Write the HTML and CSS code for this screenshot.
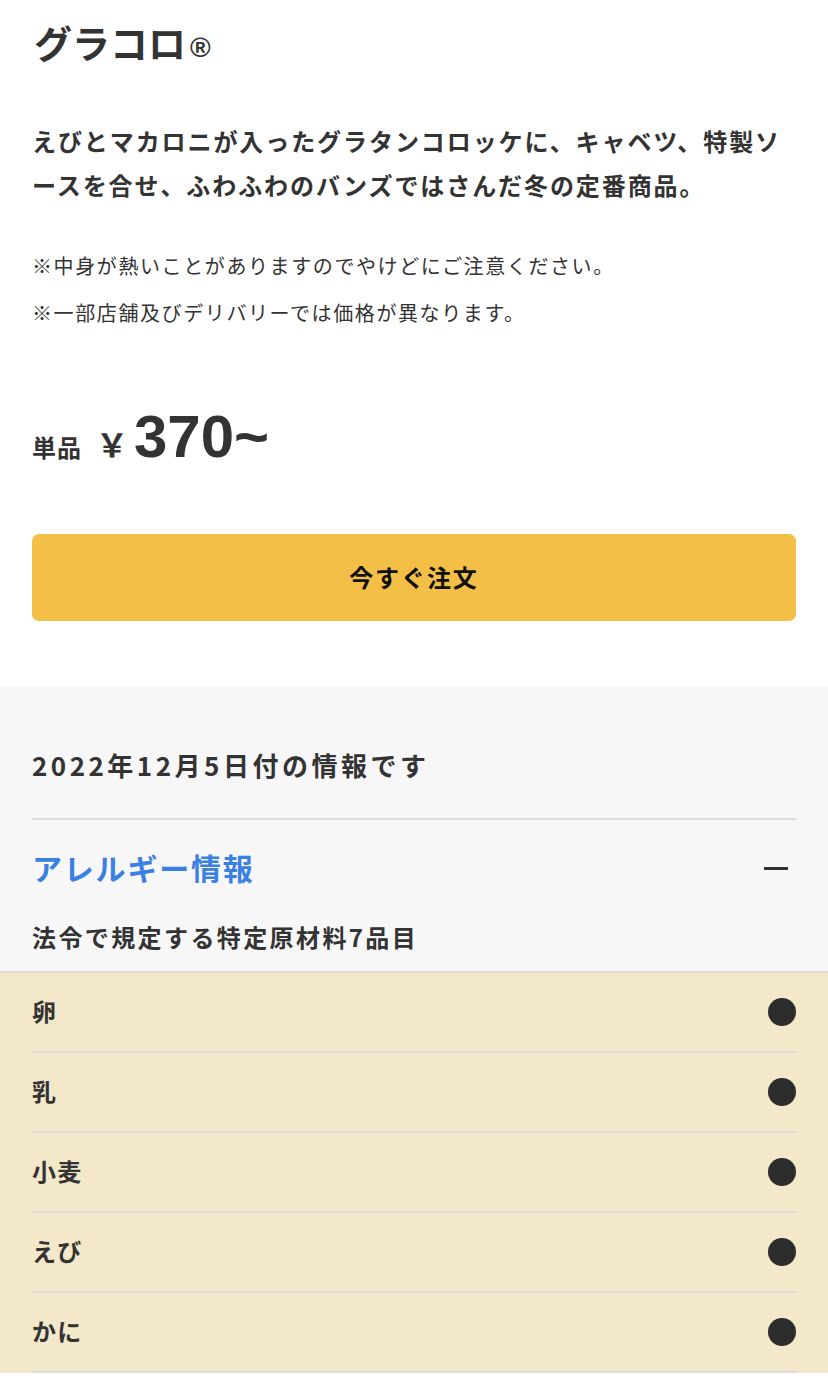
FILE: index.html
```html
<!DOCTYPE html>
<html lang="ja">
<head>
<meta charset="utf-8">
<title>グラコロ</title>
<link rel="stylesheet" href="styles.css">
</head>
<body>
<section class="product">
  <h1 class="title">グラコロ<span class="reg">®</span></h1>
  <p class="desc">えびとマカロニが入ったグラタンコロッケに、キャベツ、特製ソースを合せ、ふわふわのバンズではさんだ冬の定番商品。</p>
  <p class="note first">※中身が熱いことがありますのでやけどにご注意ください。</p>
  <p class="note">※一部店舗及びデリバリーでは価格が異なります。</p>
  <div class="price">
    <span class="price-label">単品</span>
    <span class="yen">￥</span>
    <span class="amount">370~</span>
  </div>
  <a class="order" href="#">今すぐ注文</a>
</section>
<section class="info">
  <p class="date">2022年12月5日付の情報です</p>
  <div class="acc-head">
    <h2 class="acc-title">アレルギー情報</h2>
    <span class="minus"></span>
  </div>
  <p class="sub">法令で規定する特定原材料7品目</p>
</section>
<section class="allergens">
  <div class="row"><span class="name">卵</span><span class="dot"></span></div>
  <div class="row"><span class="name">乳</span><span class="dot"></span></div>
  <div class="row"><span class="name">小麦</span><span class="dot"></span></div>
  <div class="row"><span class="name">えび</span><span class="dot"></span></div>
  <div class="row"><span class="name">かに</span><span class="dot"></span></div>
</section>
</body>
</html>
```

FILE: styles.css
```css
* { box-sizing: border-box; }
html, body { margin: 0; padding: 0; background: #fff; }
body {
  font-family: "Noto Sans CJK JP", "Noto Sans", sans-serif;
  color: #333;
  width: 828px;
}
p, h1, h2 { margin: 0; }

.product { padding: 14px 32px 65px; }

.title {
  font-size: 38px;
  line-height: 56px;
  height: 56px;
  font-weight: 700;
  letter-spacing: 0;
  padding-left: 2px;
}
.reg {
  font-family: "Liberation Sans", Arial, sans-serif;
  font-size: 28px;
  line-height: 1;
  font-weight: 700;
  margin-left: 4px;
  vertical-align: 1px;
}

.desc {
  margin-top: 49px;
  font-size: 24px;
  line-height: 44px;
  font-weight: 700;
  letter-spacing: 0.08em;
}

.note {
  font-size: 20px;
  line-height: 36px;
  letter-spacing: 0.08em;
  margin-top: 11px;
}
.note.first { margin-top: 41px; }

.price {
  display: flex;
  align-items: baseline;
  margin-top: 70px;
  height: 72px;
}
.price-label {
  font-size: 24px;
  font-weight: 700;
  letter-spacing: 0.04em;
}
.yen {
  font-size: 32px;
  font-weight: 700;
  margin-left: 14px;
}
.amount {
  font-family: "Liberation Sans", Arial, sans-serif;
  font-size: 60px;
  line-height: 72px;
  font-weight: 700;
  letter-spacing: 0;
  margin-left: 6px;
}

.order {
  display: flex;
  align-items: center;
  justify-content: center;
  margin-top: 61px;
  height: 87px;
  border-radius: 7px;
  background: #f4bf47;
  color: #111;
  text-decoration: none;
  font-size: 24px;
  font-weight: 700;
  letter-spacing: 0.08em;
  padding-bottom: 2px;
}

.info {
  background: #f7f7f7;
  padding: 61px 32px 17px;
}
.date {
  font-size: 26px;
  line-height: 36px;
  font-weight: 700;
  letter-spacing: 3.5px;
  padding-bottom: 35px;
  border-bottom: 2px solid #dcdcdc;
}
.acc-head {
  display: flex;
  align-items: center;
  justify-content: space-between;
  margin-top: 25px;
  height: 44px;
}
.acc-title {
  font-size: 30px;
  line-height: 44px;
  font-weight: 700;
  color: #3a7fe3;
  letter-spacing: 0.06em;
}
.minus {
  display: block;
  width: 24px;
  height: 3px;
  background: #333;
  margin-right: 8px;
  margin-top: 3px;
}
.sub {
  margin-top: 31px;
  font-size: 24px;
  line-height: 34px;
  font-weight: 700;
  letter-spacing: 0.1em;
}

.allergens {
  background: #f4e8ca;
  border-top: 2px solid #dcdcdc;
  padding: 0 32px;
}
.row {
  display: flex;
  align-items: center;
  justify-content: space-between;
  height: 80px;
  padding-bottom: 3px;
  border-bottom: 2px solid #dcdcdc;
}
.name {
  font-size: 24px;
  font-weight: 700;
  letter-spacing: 0.05em;
}
.dot {
  width: 28px;
  height: 28px;
  border-radius: 50%;
  background: #2c2c2c;
  margin-top: 3px;
}
```
